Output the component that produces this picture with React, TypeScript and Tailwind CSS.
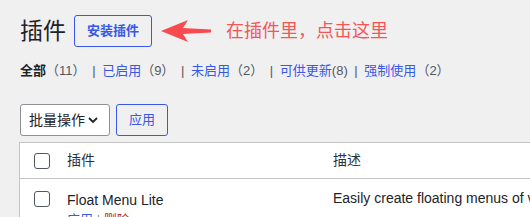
import React from "react";

const FONT = {
  fontFamily: '"Liberation Sans", "Noto Sans CJK SC", sans-serif',
};

// 상단 필터 링크 목록
const FILTERS = [
  { label: "全部", count: "（11）", current: true },
  { label: "已启用", count: "（9）" },
  { label: "未启用", count: "（2）" },
  { label: "可供更新", count: "(8)" },
  { label: "强制使用", count: "（2）" },
];

function Arrow() {
  return (
    <svg width="52" height="24" viewBox="0 0 52 24" className="ml-[8px] shrink-0">
      <polygon
        points="1,12 28,1 23,9 51,10.5 51,13.5 23,15 28,23"
        fill="#f74b4f"
      />
    </svg>
  );
}

function CheckBox() {
  return (
    <span className="block w-[16px] h-[16px] border border-[#50575e] rounded-[3px] bg-white" />
  );
}

export default function App() {
  return (
    <div
      className="h-[217px] w-[530px] overflow-hidden bg-[#f0f0f1] pl-[19px] text-[#1d2327]"
      style={FONT}
    >
      {/* 제목 + 설치 버튼 + 안내 화살표 */}
      <div className="flex items-center pt-[15px] pl-px">
        <h1 className="text-[23px] leading-[32px] font-normal">插件</h1>
        <button className="ml-[8px] h-[32px] w-[78px] border border-[#3858e9] rounded-[3px] text-[13px] font-semibold text-[#3858e9] bg-transparent">
          安装插件
        </button>
        <Arrow />
        <span className="ml-[14px] text-[18px] text-[#f65558]">在插件里，点击这里</span>
      </div>

      {/* 필터 */}
      <div className="mt-[14px] pl-px text-[13px] leading-[20px] whitespace-nowrap">
        {FILTERS.map((f, i) => (
          <span key={f.label}>
            {i > 0 && <span className="mx-[3px] text-[#50575e]"> | </span>}
            <span className={f.current ? "font-bold text-[#1d2327]" : "text-[#3858e9]"}>
              {f.label}
            </span>
            <span className="text-[#50575e]">{f.count}</span>
          </span>
        ))}
      </div>

      {/* 일괄 작업 */}
      <div className="mt-[23px] flex pl-px">
        <div className="flex items-center h-[32px] w-[90px] border border-[#8c8f94] rounded-[3px] bg-white pl-[8px] text-[14px]">
          批量操作
          <svg width="12" height="12" viewBox="0 0 12 12" className="ml-[2px]">
            <path d="M2 4 L6 8 L10 4" fill="none" stroke="#1d2327" strokeWidth="1.8" />
          </svg>
        </div>
        <button className="ml-[6px] h-[32px] w-[52px] border border-[#3858e9] rounded-[3px] text-[13px] text-[#3858e9]">
          应用
        </button>
      </div>

      {/* 플러그인 목록 */}
      <div className="mt-[6px] w-[600px] border border-[#c3c4c7] bg-white">
        <div className="flex h-[36px] items-center border-b border-[#c3c4c7] text-[14px] text-[#2c3338]">
          <div className="w-[47px] pl-[14px]">
            <CheckBox />
          </div>
          <div className="w-[266px]">插件</div>
          <div>描述</div>
        </div>
        <div className="flex">
          <div className="w-[47px] pl-[14px] pt-[12px]">
            <CheckBox />
          </div>
          <div className="w-[266px] pt-[11px]">
            <div className="text-[14px] leading-[20px]">Float Menu Lite</div>
            <div className="text-[13px] leading-[20px]">
              <span className="text-[#3858e9]">应用</span>
              <span className="text-[#8c8f94]"> | </span>
              <span className="text-[#b32d2e]">删除</span>
            </div>
          </div>
          <div className="pt-[9px] text-[14px] leading-[20px] whitespace-nowrap">
            Easily create floating menus of various types
          </div>
        </div>
      </div>
    </div>
  );
}
